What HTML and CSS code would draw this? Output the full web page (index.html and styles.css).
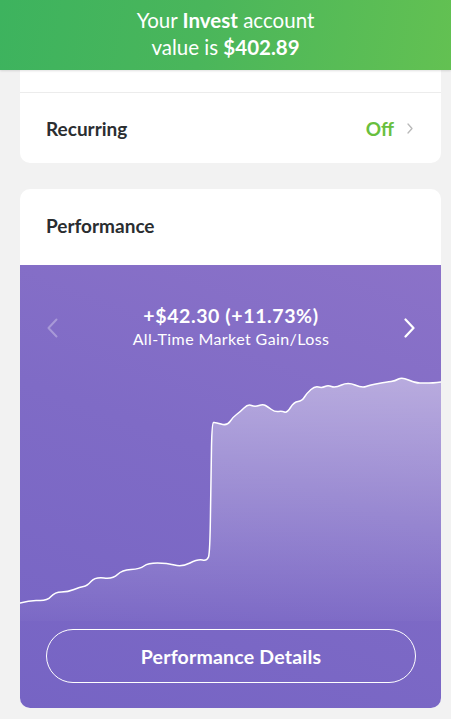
FILE: index.html
```html
<!DOCTYPE html>
<html lang="en">
<head>
    <meta charset="UTF-8">
    <meta name="viewport" content="width=device-width, initial-scale=1.0">
    <title>Invest</title>
    <link rel="stylesheet" href="styles.css">
</head>
<body>
    <div class="banner">
        <p>Your <b>Invest</b> account</p>
        <p>value is <b>$402.89</b></p>
    </div>

    <div class="card settings">
        <div class="prevRow"></div>
        <div class="row">
            <span class="rowLabel">Recurring</span>
            <span class="rowValue">
                Off
                <svg class="smallChevron" width="6" height="11" viewBox="0 0 6 11">
                    <path d="M1 1 L5 5.5 L1 10" fill="none" stroke="#b9b9b9" stroke-width="1.3" stroke-linecap="round" stroke-linejoin="round"/>
                </svg>
            </span>
        </div>
    </div>

    <div class="card performance">
        <div class="cardTitle">Performance</div>
        <div class="purple">
            <div class="summary">
                <svg class="chevron faded" width="11" height="20" viewBox="0 0 11 20">
                    <path d="M9.5 1.5 L1.5 10 L9.5 18.5" fill="none" stroke="#fff" stroke-width="2" stroke-linecap="round" stroke-linejoin="round"/>
                </svg>
                <div class="summaryText">
                    <div class="gain">+$42.30 (+11.73%)</div>
                    <div class="gainLabel">All-Time Market Gain/Loss</div>
                </div>
                <svg class="chevron" width="11" height="20" viewBox="0 0 11 20">
                    <path d="M1.5 1.5 L9.5 10 L1.5 18.5" fill="none" stroke="#fff" stroke-width="2.2" stroke-linecap="round" stroke-linejoin="round"/>
                </svg>
            </div>

            <svg class="chart" width="421" height="270" viewBox="0 0 421 270">
                <defs>
                    <linearGradient id="areaFill" x1="0" y1="0" x2="0" y2="1">
                        <stop offset="0" stop-color="#fff" stop-opacity="0.42"/>
                        <stop offset="1" stop-color="#fff" stop-opacity="0.02"/>
                    </linearGradient>
                </defs>
                <path id="area" fill="url(#areaFill)" d=""/>
                <path id="line" fill="none" stroke="#fff" stroke-width="1.5" stroke-linejoin="round" stroke-linecap="round" d=""/>
            </svg>

            <button class="detailsButton">Performance Details</button>
        </div>
    </div>

    <script src="chart.js"></script>
</body>
</html>
```

FILE: styles.css
```css
body{
    margin: 0;
    background-color: #f2f2f2;
    font-family: Lato, "Open Sans", sans-serif;
    color: #2a2d30;
}

.banner{
    height: 70px;
    box-sizing: border-box;
    padding-top: 7px;
    background: linear-gradient(100deg, #3db35e 0%, #4ab65b 45%, #63c152 100%);
    color: #ffffff;
    text-align: center;
    font-size: 20.5px;
    box-shadow: 0 1px 2px rgba(0, 0, 0, 0.12);
    position: relative;
}

.banner p{
    margin: 0;
    line-height: 27px;
}

.banner b{
    font-weight: 700;
}

.card{
    background-color: #ffffff;
    margin: 0 10px 0 20px;
    border-radius: 10px;
    overflow: hidden;
}

.settings{
    border-top-left-radius: 0;
    border-top-right-radius: 0;
}

.prevRow{
    height: 22px;
    border-bottom: 1px solid #ececec;
}

.row{
    height: 70px;
    display: flex;
    align-items: center;
    justify-content: space-between;
    padding: 0 28px 0 26px;
}

.rowLabel{
    font-size: 19px;
    font-weight: 700;
    color: #2b2e31;
}

.rowValue{
    display: flex;
    align-items: center;
    gap: 13px;
    font-size: 19px;
    font-weight: 700;
    color: #69bf3e;
}

.performance{
    margin-top: 26px;
}

.cardTitle{
    height: 76px;
    line-height: 74px;
    padding-left: 26px;
    font-size: 19px;
    font-weight: 700;
}

.purple{
    background: linear-gradient(200deg, #8b72c8 0%, #7f6bc6 45%, #7664c4 100%);
    padding-top: 40px;
    padding-bottom: 25px;
}

.summary{
    display: flex;
    align-items: center;
    justify-content: space-between;
    padding: 0 26px 0 27px;
    color: #ffffff;
}

.summaryText{
    text-align: center;
}

.gain{
    font-size: 19.5px;
    font-weight: 700;
    line-height: 22px;
    letter-spacing: 0.6px;
}

.gainLabel{
    font-size: 16px;
    line-height: 24px;
    letter-spacing: 0.4px;
}

.chevron{
    display: block;
}

.faded{
    opacity: 0.3;
}

.chart{
    display: block;
}

.detailsButton{
    display: block;
    box-sizing: border-box;
    width: 370px;
    height: 54px;
    margin: 8px 0 0 26px;
    background: transparent;
    border: 1.5px solid #ffffff;
    border-radius: 27px;
    color: #ffffff;
    font-family: Lato, "Open Sans", sans-serif;
    font-size: 19.5px;
    font-weight: 700;
    letter-spacing: 0.2px;
}
```

FILE: chart.js
```js
// market value points, in chart pixels
const points = [
    [0, 252], [10, 249], [27, 250], [35, 241], [48, 241], [60, 236], [67, 235],
    [75, 226], [93, 228], [102, 219], [120, 218], [128, 212], [147, 212],
    [162, 216], [178, 208], [187, 210], [190, 202], [191, 120], [192, 72],
    [195, 71], [207, 75], [213, 66], [220, 61], [228, 53], [235, 56], [243, 53],
    [248, 56], [255, 61], [262, 60], [267, 62], [274, 51], [282, 50], [287, 42],
    [295, 35], [302, 37], [308, 34], [315, 37], [328, 31], [342, 37], [350, 34],
    [367, 31], [375, 30], [382, 26], [395, 32], [405, 32], [413, 32], [421, 31]
];

function smoothPath(pts) {
    let d = "M" + pts[0][0] + " " + pts[0][1];
    for (let i = 1; i < pts.length - 1; i++) {
        let mx = (pts[i][0] + pts[i + 1][0]) / 2;
        let my = (pts[i][1] + pts[i + 1][1]) / 2;
        d += " Q" + pts[i][0] + " " + pts[i][1] + " " + mx + " " + my;
    }
    let last = pts[pts.length - 1];
    d += " L" + last[0] + " " + last[1];
    return d;
}

const lineD = smoothPath(points);
document.getElementById("line").setAttribute("d", lineD);
document.getElementById("area").setAttribute("d", lineD + " L421 270 L0 270 Z");
```
